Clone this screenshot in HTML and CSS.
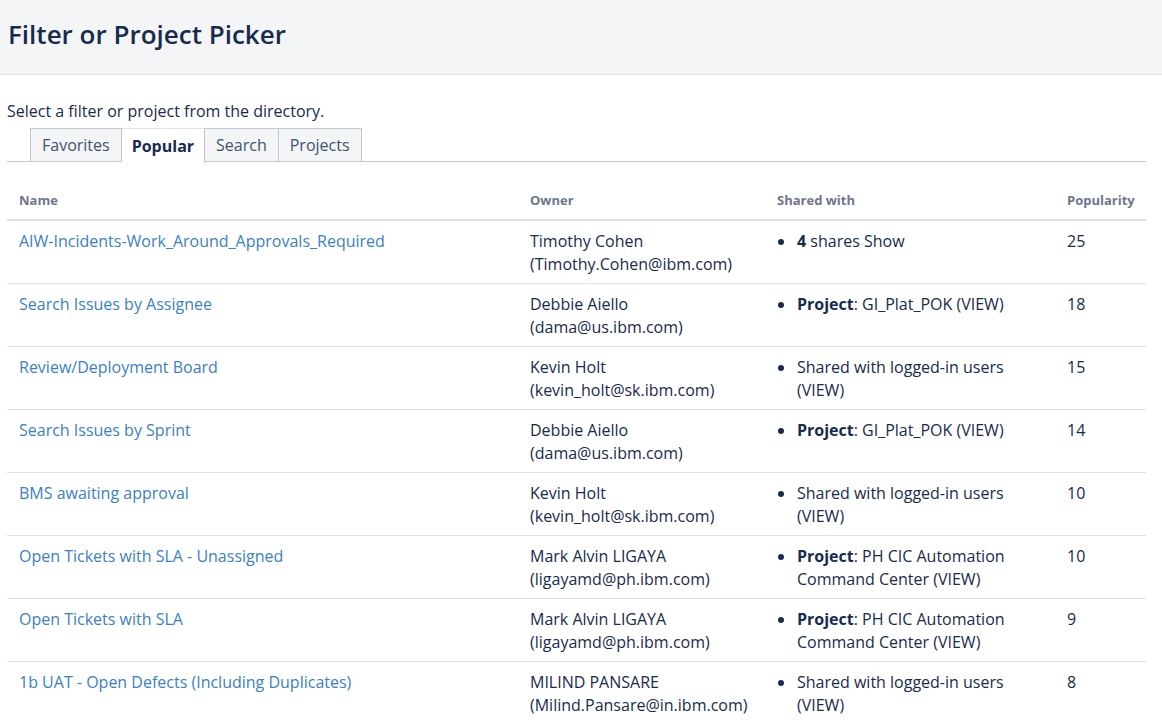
FILE: index.html
```html
<!DOCTYPE html>
<html>
<head>
<meta charset="utf-8">
<link rel="stylesheet" href="styles.css">
</head>
<body>
<header class="page-header">
  <h1>Filter or Project Picker</h1>
</header>
<main class="content">
  <p class="intro">Select a filter or project from the directory.</p>
  <nav class="tabs">
    <span class="tab">Favorites</span>
    <span class="tab active">Popular</span>
    <span class="tab">Search</span>
    <span class="tab">Projects</span>
  </nav>
  <table class="grid">
    <colgroup>
      <col class="c-name"><col class="c-owner"><col class="c-shared"><col class="c-pop">
    </colgroup>
    <thead>
      <tr><th>Name</th><th>Owner</th><th>Shared with</th><th>Popularity</th></tr>
    </thead>
    <tbody>
      <tr>
        <td><a href="#">AIW-Incidents-Work_Around_Approvals_Required</a></td>
        <td>Timothy Cohen<br>(Timothy.Cohen@ibm.com)</td>
        <td><ul class="shares"><li><b>4</b> shares Show</li></ul></td>
        <td>25</td>
      </tr>
      <tr>
        <td><a href="#">Search Issues by Assignee</a></td>
        <td>Debbie Aiello<br>(dama@us.ibm.com)</td>
        <td><ul class="shares"><li><b>Project</b>: GI_Plat_POK (VIEW)</li></ul></td>
        <td>18</td>
      </tr>
      <tr>
        <td><a href="#">Review/Deployment Board</a></td>
        <td>Kevin Holt<br>(kevin_holt@sk.ibm.com)</td>
        <td><ul class="shares"><li>Shared with logged-in users<br>(VIEW)</li></ul></td>
        <td>15</td>
      </tr>
      <tr>
        <td><a href="#">Search Issues by Sprint</a></td>
        <td>Debbie Aiello<br>(dama@us.ibm.com)</td>
        <td><ul class="shares"><li><b>Project</b>: GI_Plat_POK (VIEW)</li></ul></td>
        <td>14</td>
      </tr>
      <tr>
        <td><a href="#">BMS awaiting approval</a></td>
        <td>Kevin Holt<br>(kevin_holt@sk.ibm.com)</td>
        <td><ul class="shares"><li>Shared with logged-in users<br>(VIEW)</li></ul></td>
        <td>10</td>
      </tr>
      <tr>
        <td><a href="#">Open Tickets with SLA - Unassigned</a></td>
        <td>Mark Alvin LIGAYA<br>(ligayamd@ph.ibm.com)</td>
        <td><ul class="shares"><li><b>Project</b>: PH CIC Automation<br>Command Center (VIEW)</li></ul></td>
        <td>10</td>
      </tr>
      <tr>
        <td><a href="#">Open Tickets with SLA</a></td>
        <td>Mark Alvin LIGAYA<br>(ligayamd@ph.ibm.com)</td>
        <td><ul class="shares"><li><b>Project</b>: PH CIC Automation<br>Command Center (VIEW)</li></ul></td>
        <td>9</td>
      </tr>
      <tr>
        <td><a href="#">1b UAT - Open Defects (Including Duplicates)</a></td>
        <td>MILIND PANSARE<br>(Milind.Pansare@in.ibm.com)</td>
        <td><ul class="shares"><li>Shared with logged-in users<br>(VIEW)</li></ul></td>
        <td>8</td>
      </tr>
    </tbody>
  </table>
</main>
</body>
</html>
```
FILE: styles.css
```css
* { box-sizing: border-box; }
html, body { margin: 0; padding: 0; background: #fff; }
body {
  font-family: "Open Sans", "Noto Sans", sans-serif;
  font-size: 16px;
  line-height: 23px;
  color: #172b4d;
}
.page-header {
  background: #f4f5f7;
  border-bottom: 1px solid #dfe1e6;
  height: 75px;
  display: flex;
  align-items: center;
  padding: 0 8px;
}
.page-header h1 {
  margin: 0;
  font-size: 26px;
  font-weight: 600;
  line-height: 32px;
  color: #172b4d;
  padding-bottom: 7px;
}
.content {
  padding: 0 16px 0 7px;
}
.intro {
  margin: 0;
  padding-top: 25px;
  line-height: 23px;
  height: 53px;
}
.tabs {
  display: flex;
  padding-left: 23px;
  border-bottom: 1px solid #c1c7d0;
  height: 34px;
}
.tab {
  display: flex;
  align-items: center;
  justify-content: center;
  padding: 0 11px;
  height: 34px;
  background: #f4f5f7;
  border: 1px solid #c1c7d0;
  border-left: none;
  color: #42526e;
}
.tab:first-child { border-left: 1px solid #c1c7d0; }
.tab.active {
  background: #fff;
  font-weight: 700;
  color: #172b4d;
  height: 35px;
  border-bottom: none;
  border-top-color: #dfe1e6;
  padding: 0 10px;
}
.grid {
  width: 1139px;
  border-collapse: collapse;
  table-layout: fixed;
  margin-top: 19px;
}
.c-name { width: 511px; }
.c-owner { width: 247px; }
.c-shared { width: 290px; }
.c-pop { width: 91px; }
.grid th {
  text-align: left;
  font-size: 13px;
  font-weight: 700;
  color: #6b778c;
  padding: 9px 12px 9px;
  line-height: 20px;
  border-bottom: 2px solid #dfe1e6;
}
.grid td {
  vertical-align: top;
  padding: 9px 12px 7px;
  border-bottom: 1px solid #dfe1e6;
  line-height: 23px;
}
.grid a {
  color: #3b7fc4;
  text-decoration: none;
}
.shares {
  list-style: none;
  margin: 0;
  padding: 0;
}
.shares li {
  position: relative;
  padding-left: 20px;
}
.shares li::before {
  content: "";
  position: absolute;
  left: 1px;
  top: 9px;
  width: 6px;
  height: 6px;
  border-radius: 50%;
  background: #172b4d;
}
.shares b { font-weight: 700; }
```
